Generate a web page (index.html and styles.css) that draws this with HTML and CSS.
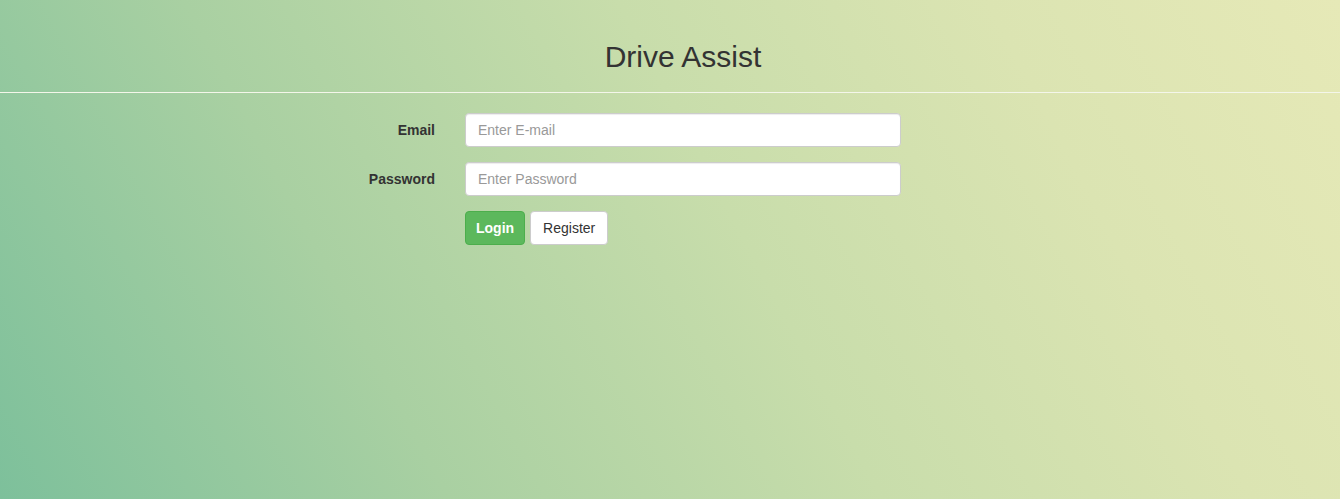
FILE: index.html
```html
<!DOCTYPE html>
<html lang="en">
<head>
<meta charset="utf-8">
<title>Drive Assist</title>
<link rel="stylesheet" href="styles.css">
</head>
<body>
<header class="header">
  <h1 class="title">Drive Assist</h1>
</header>
<hr class="divider">
<form class="login-form">
  <label class="field-label" for="email">Email</label>
  <input class="field-input" id="email" type="email" placeholder="Enter E-mail">
  <label class="field-label" for="password">Password</label>
  <input class="field-input" id="password" type="password" placeholder="Enter Password">
  <span class="spacer"></span>
  <div class="actions">
    <button type="button" class="btn btn-success">Login</button>
    <button type="button" class="btn btn-default">Register</button>
  </div>
</form>
</body>
</html>
```

FILE: styles.css
```css
* { box-sizing: border-box; }
html, body { height: 100%; }
body {
  margin: 0;
  font-family: "Liberation Sans", Arial, sans-serif;
  font-size: 14px;
  color: #333;
  background: linear-gradient(62deg, #7dc09b 0%, #a9d0a2 28%, #c8ddab 55%, #dbe4b2 78%, #e6e9b7 100%);
  background-attachment: fixed;
}
.header {
  padding-top: 40px;
  padding-left: 26px;
  text-align: center;
}
.title {
  margin: 0;
  font-size: 30px;
  font-weight: 400;
  line-height: 33px;
  color: #333;
}
.divider {
  margin: 19px 0 0;
  border: 0;
  border-top: 1px solid #f4f6ea;
  height: 0;
}
.login-form {
  display: grid;
  grid-template-columns: 450px 436px;
  column-gap: 15px;
  row-gap: 15px;
  margin-top: 20px;
}
.field-label {
  padding-right: 15px;
  text-align: right;
  font-weight: 700;
  line-height: 20px;
  padding-top: 7px;
}
.field-input {
  height: 34px;
  padding: 6px 12px;
  font-family: inherit;
  font-size: 14px;
  color: #555;
  background: #fff;
  border: 1px solid #ccc;
  border-radius: 4px;
  box-shadow: inset 0 1px 1px rgba(0,0,0,.075);
}
.field-input::placeholder { color: #999; }
.actions {
  display: flex;
  gap: 5px;
}
.btn {
  height: 34px;
  padding: 6px 12px;
  font-family: inherit;
  font-size: 14px;
  line-height: 20px;
  border: 1px solid transparent;
  border-radius: 4px;
}
.btn-success {
  padding: 6px 10px;
  font-weight: 700;
  color: #fff;
  background: #5cb85c;
  border-color: #4cae4c;
}
.btn-default {
  color: #333;
  background: #fff;
  border-color: #ccc;
}
```
